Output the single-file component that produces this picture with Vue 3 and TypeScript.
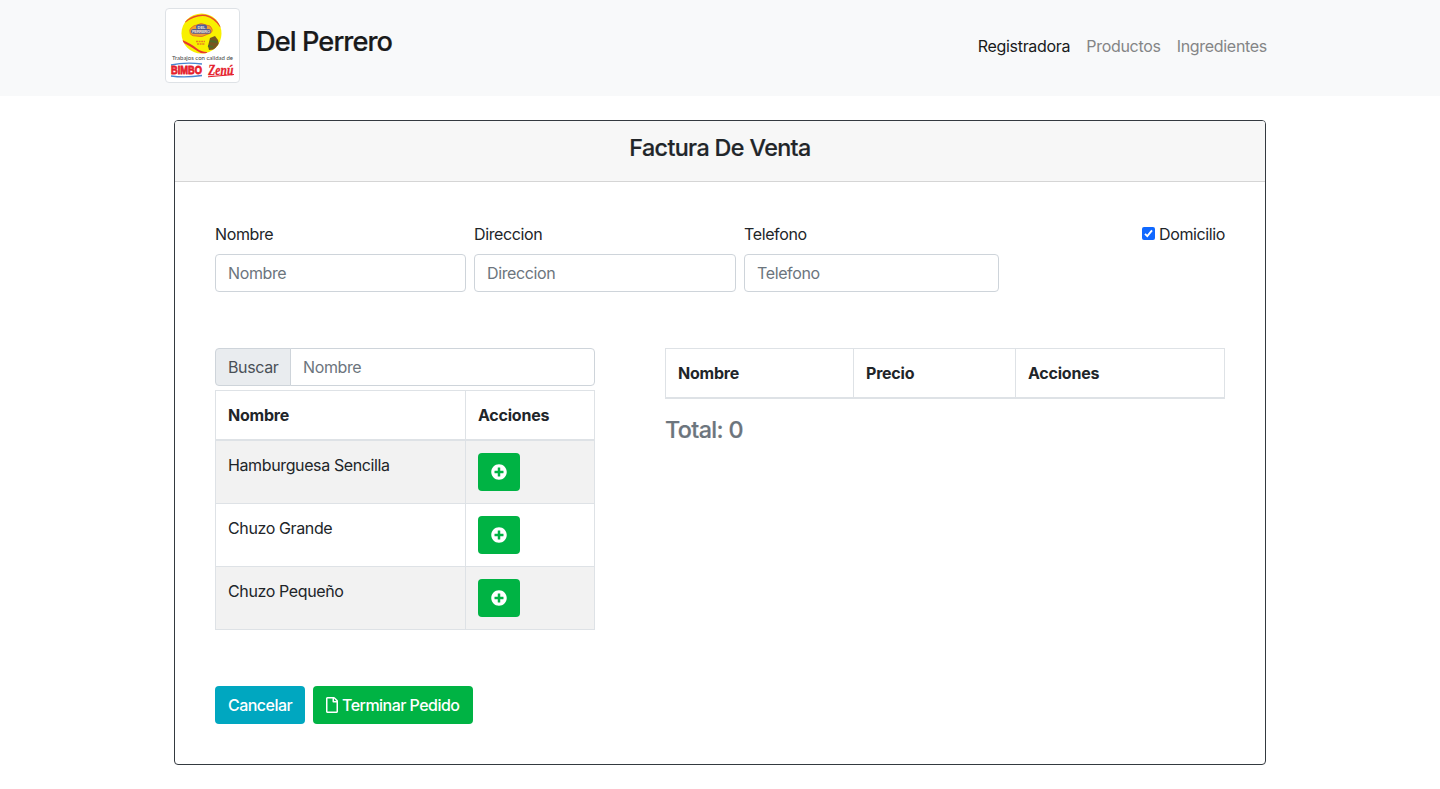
<script setup lang="ts">
import { ref } from 'vue'

interface Product {
  id: number
  name: string
}

const links = ['Registradora', 'Productos', 'Ingredientes']
const products: Product[] = [
  { id: 1, name: 'Hamburguesa Sencilla' },
  { id: 2, name: 'Chuzo Grande' },
  { id: 3, name: 'Chuzo Pequeño' },
]
const delivery = ref(true)
const total = ref(0)
</script>

<template>
  <div class="page">
    <nav class="navbar">
      <div class="nav-inner">
        <svg class="logo" viewBox="0 0 75 75" width="75" height="75">
          <rect x=".5" y=".5" width="74" height="74" rx="3.5" fill="#fff" stroke="#dee2e6" />
          <clipPath id="disc"><circle cx="36.5" cy="25.5" r="20" /></clipPath>
          <g clip-path="url(#disc)">
            <rect x="16" y="5" width="41" height="41" fill="#f8f000" />
            <path d="M20 14Q30 6 41 7.500Q50 10 56 19" fill="none" stroke="#e8482d" stroke-width="1.500" />
            <path d="M17 33Q26 37 31 41T42 45" fill="none" stroke="#e8382d" stroke-width="2" />
            <path d="M43 38l2-8 5-2 3 4 2 9-11 1z" fill="#76551f" />
            <path d="M45 33l7 1M43 38l5 1" stroke="#4e6b27" stroke-width="2" />
          </g>
          <path d="M26 20q3-3 6-3 4-3 9 0 5 0 6 4 1 4-4 5-6 4-12 2-6 0-6-4-1-2 1-4z" fill="#f0a030" stroke="#e0602a" stroke-width=".8" />
          <rect x="31" y="16.500" width="11" height="5" rx="2.5" fill="#4d5d9c" />
          <rect x="26" y="21" width="20" height="4.800" rx="2.4" fill="#55598c" />
          <text class="lg tiny" x="36.5" y="20.500" textLength="8">DEL</text>
          <text class="lg tiny" x="36" y="25" textLength="18">PERRERO</text>
          <path d="M31 33.500h9M32 36h8" stroke="#e98020" stroke-width="1.5" stroke-dasharray="2 .6" />
          <text class="lg slogan" x="37.5" y="52" textLength="61" lengthAdjust="spacingAndGlyphs">Trabajos con calidad de</text>
          <path d="M6 57Q20 54 37 56M6 68Q20 70 37 67.500" fill="none" stroke="#4a86d0" stroke-width="1.3" />
          <text class="lg bimbo" x="21.5" y="66" textLength="31" lengthAdjust="spacingAndGlyphs">BIMBO</text>
          <text class="lg zenu" x="55.8" y="66.500" textLength="25" lengthAdjust="spacingAndGlyphs">Zenú</text>
          <path d="M43 68.8L69 66.500" stroke="#e51d2c" stroke-width="1" />
        </svg>
        <h3 class="brand">Del Perrero</h3>
        <div class="links">
          <a v-for="(l, i) in links" :key="l" :class="['link', { active: i === 0 }]">{{ l }}</a>
        </div>
      </div>
    </nav>

    <main class="card">
      <header class="card-header"><h4>Factura De Venta</h4></header>
      <div class="card-body">
        <div class="client">
          <label class="field">Nombre<input class="control" placeholder="Nombre" /></label>
          <label class="field">Direccion<input class="control" placeholder="Direccion" /></label>
          <label class="field">Telefono<input class="control" placeholder="Telefono" /></label>
          <label class="check">
            <input v-model="delivery" type="checkbox" class="native" />
            <svg class="box" viewBox="0 0 13 13" width="13" height="13">
              <rect width="13" height="13" rx="2" fill="#0f68ff" />
              <path v-if="delivery" d="M3 6.9L5.3 9.2 10 3.4" fill="none" stroke="#fff" stroke-width="1.9" />
            </svg>
            <span>Domicilio</span>
          </label>
        </div>

        <div class="columns">
          <section class="left">
            <div class="search">
              <span class="addon">Buscar</span>
              <input class="control" placeholder="Nombre" />
            </div>
            <table class="table">
              <colgroup><col class="c-name" /><col /></colgroup>
              <thead><tr><th>Nombre</th><th>Acciones</th></tr></thead>
              <tbody>
                <tr v-for="p in products" :key="p.id">
                  <td>{{ p.name }}</td>
                  <td>
                    <button class="btn green add">
                      <svg viewBox="0 0 512 512" width="16" height="16" fill="#fff">
                        <path d="M256 8C119 8 8 119 8 256s111 248 248 248 248-111 248-248S393 8 256 8zm144 276c0 6.600-5.400 12-12 12h-92v92c0 6.600-5.400 12-12 12h-56c-6.600 0-12-5.400-12-12v-92h-92c-6.600 0-12-5.400-12-12v-56c0-6.600 5.400-12 12-12h92v-92c0-6.600 5.400-12 12-12h56c6.600 0 12 5.400 12 12v92h92c6.600 0 12 5.400 12 12v56z" />
                      </svg>
                    </button>
                  </td>
                </tr>
              </tbody>
            </table>
          </section>
          <section class="right">
            <table class="table">
              <colgroup><col class="c-item" /><col class="c-price" /><col /></colgroup>
              <thead><tr><th>Nombre</th><th>Precio</th><th>Acciones</th></tr></thead>
            </table>
            <h4 class="total">Total: {{ total }}</h4>
          </section>
        </div>

        <div class="actions">
          <button class="btn teal">Cancelar</button>
          <button class="btn green finish">
            <svg viewBox="0 0 384 512" width="12" height="16" fill="#fff">
              <path d="M369.900 97.900L286 14C277 5 264.800-.1 252.100-.1H48C21.500 0 0 21.500 0 48v416c0 26.500 21.500 48 48 48h288c26.500 0 48-21.500 48-48V131.900c0-12.700-5.100-25-14.100-34zM332.100 128H256V51.900l76.100 76.100zM48 464V48h160v104c0 13.300 10.700 24 24 24h104v288H48z" />
            </svg>
            <span>Terminar Pedido</span>
          </button>
        </div>
      </div>
    </main>
  </div>
</template>

<style>
body { margin: 0; background: #fff; }
</style>

<style scoped>
.page { font: 400 16px/24px Inter, "Liberation Sans", sans-serif; color: #212529; letter-spacing: -0.38px; }
.page * { box-sizing: border-box; }
h3, h4 { margin: 0; font-weight: 500; -webkit-text-stroke: 0.2px currentColor; }
.navbar { height: 96px; background: #f8f9fa; }
.nav-inner { width: 1110px; margin: 0 auto; padding-top: 8px; display: flex; }
.logo { display: block; margin-right: 16px; }
.lg { text-anchor: middle; letter-spacing: 0; }
.tiny { font: 700 4px "Liberation Sans", sans-serif; fill: #f3e5d0; }
.slogan { font: 400 6.500px Lato, sans-serif; fill: #444; }
.bimbo { font: 700 11.500px "Liberation Sans", sans-serif; fill: #e51d2c; stroke: #e51d2c; stroke-width: .8; }
.zenu { font: italic 700 14px "Liberation Serif", serif; fill: #e51d2c; stroke: #e51d2c; stroke-width: .3; }
.brand { font-size: 27.2px; line-height: 34px; margin-top: 17px; color: #191a1b; letter-spacing: -0.92px; }
.links { margin-left: auto; margin-right: 8px; display: flex; gap: 16px; padding-top: 26px; letter-spacing: -0.3px; }
.link { color: #848586; }
.link.active { color: #191a1b; }
.card { width: 1092px; height: 645px; margin: 24px auto 0; border: 1px solid #343a40; border-radius: 4px; overflow: hidden; }
.card-header { height: 61px; background: #f7f7f7; border-bottom: 1px solid #d5d5d5; padding-top: 12px; text-align: center; }
h4 { font-size: 23.3px; line-height: 29px; letter-spacing: -0.61px; }
.card-body { padding: 40px; }
.client { display: grid; grid-template-columns: 251px 262px 255px 1fr; gap: 8px; }
.field { display: flex; flex-direction: column; gap: 8px; }
.control { width: 100%; height: 38px; border: 1px solid #ced4da; border-radius: 4px; padding: 6px 12px; font: inherit; letter-spacing: inherit; color: #495057; background: #fff; outline: none; }
.control::placeholder { color: #6c757d; opacity: 1; }
.check { display: flex; justify-content: flex-end; gap: 4px; height: 24px; }
.native { display: none; }
.box { margin-top: 5px; }
.columns { margin-top: 56px; display: flex; justify-content: space-between; height: 282px; }
.left { width: 380px; }
.right { width: 560px; }
.search { display: flex; margin-bottom: 4px; }
.addon { flex: none; width: 76px; height: 38px; padding: 6px 12px; border: 1px solid #ced4da; border-radius: 4px 0 0 4px; background: #e9ecef; color: #495057; }
.search .control { border-radius: 0 4px 4px 0; margin-left: -1px; }
.table { width: 100%; border-collapse: collapse; table-layout: fixed; border: 1px solid #dee2e6; }
.c-name { width: 250px; }
.c-item { width: 188px; }
.c-price { width: 162px; }
th, td { border: 1px solid #dee2e6; padding: 12px; text-align: left; vertical-align: top; }
th { border-bottom-width: 2px; font-weight: 700; letter-spacing: -0.22px; }
tbody tr:nth-child(odd) { background: #f2f2f2; }
.btn { display: flex; align-items: center; height: 38px; border: 0; border-radius: 4px; padding: 0 13px; color: #fff; font: 500 16px/24px Inter, sans-serif; letter-spacing: -0.53px; white-space: nowrap; }
.btn svg { flex: none; }
.green { background: #00b344; }
.teal { background: #00a7c0; width: 90px; }
.finish { gap: 4px; width: 160px; }
.total { margin-top: 16px; color: #6c757d; }
.actions { margin-top: 56px; display: flex; gap: 8px; }
</style>
